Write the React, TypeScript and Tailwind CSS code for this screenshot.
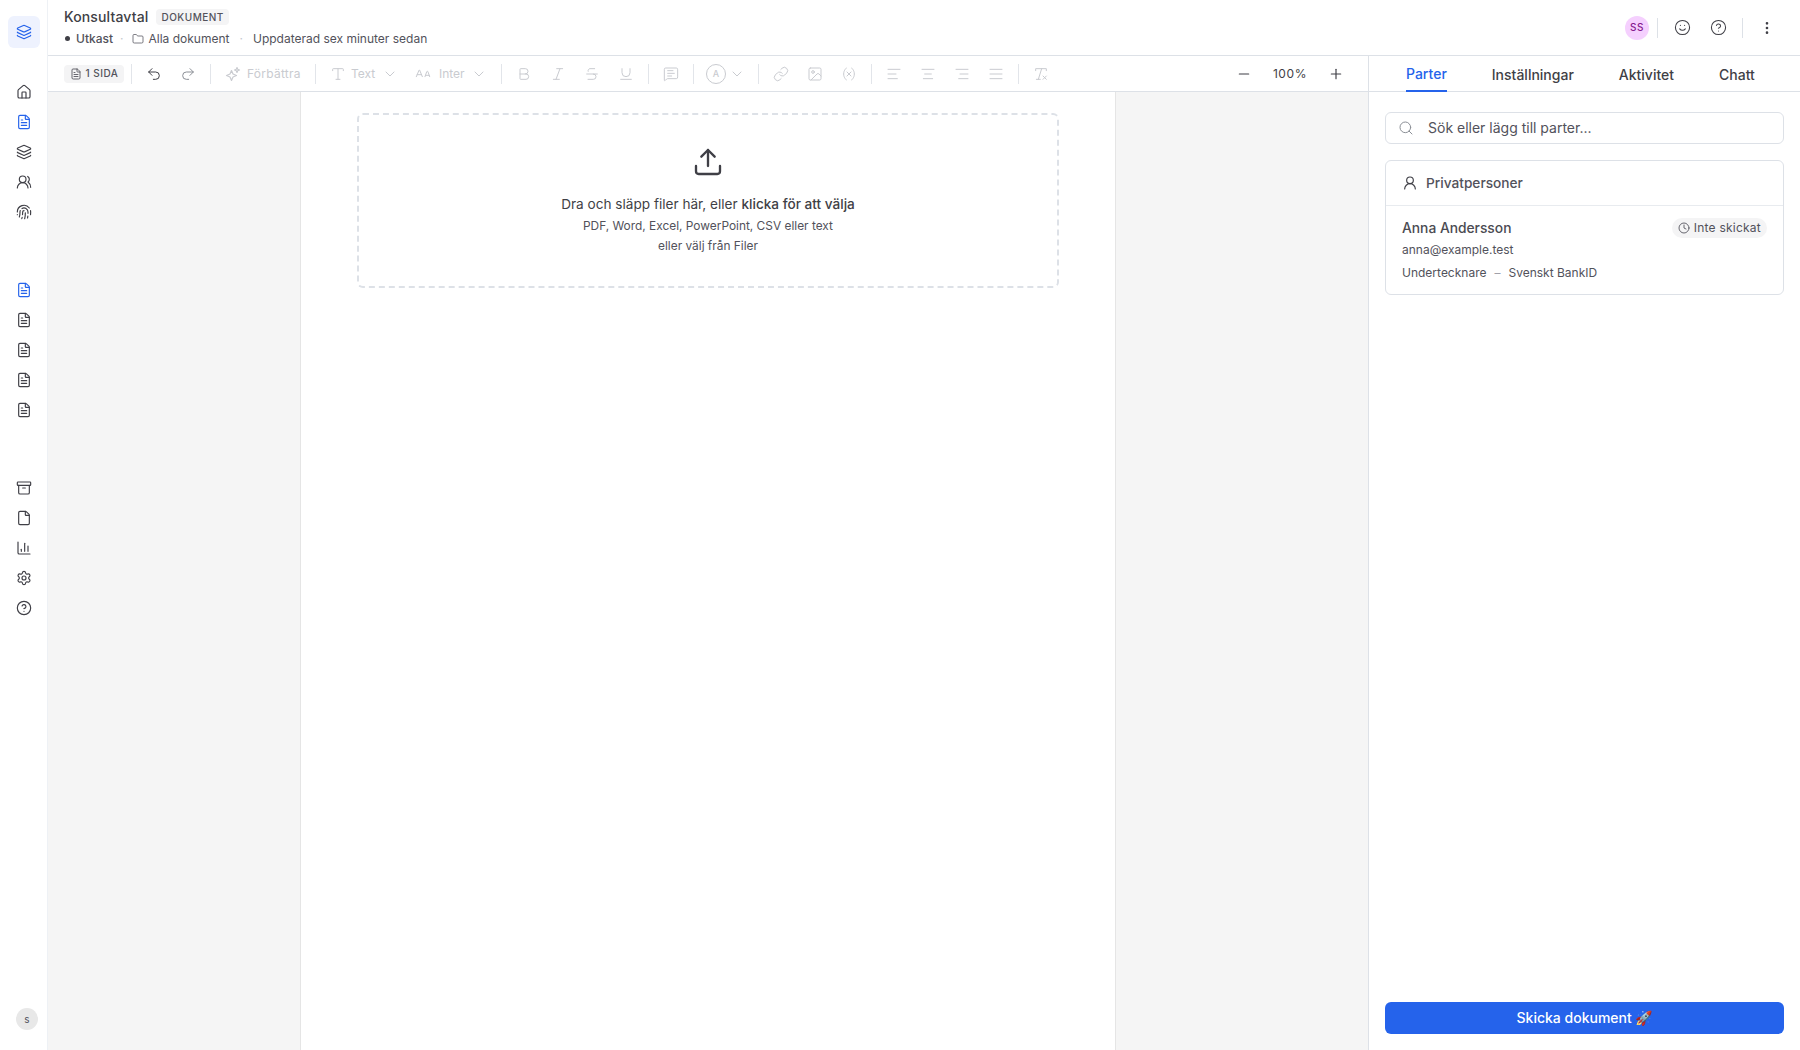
import {
  AlignCenter,
  AlignJustify,
  AlignLeft,
  AlignRight,
  Archive,
  Bold,
  ChartColumn,
  ChevronDown,
  CircleHelp,
  Clock,
  EllipsisVertical,
  File,
  FileText,
  Fingerprint,
  Folder,
  House,
  Image,
  Italic,
  Layers,
  Link,
  MessageSquareText,
  Minus,
  Plus,
  Redo2,
  RemoveFormatting,
  Search,
  Settings,
  Smile,
  Strikethrough,
  Type,
  Underline,
  Undo2,
  Upload,
  UserRound,
  UsersRound,
  Variable,
  ALargeSmall,
  type LucideIcon,
} from 'lucide-react';

function SideIcon({ icon: Icon, active }: { icon: LucideIcon; active?: boolean }) {
  return (
    <div className="flex h-[30px] w-full items-center justify-center">
      <Icon className={active ? 'h-4 w-4 text-[#2563eb]' : 'h-4 w-4 text-[#3f3f46]'} strokeWidth={1.75} />
    </div>
  );
}

function Sidebar() {
  return (
    <aside className="flex h-full w-[48px] shrink-0 flex-col border-r border-[#eef1f5] bg-white">
      <div className="mx-2 mt-4 flex h-8 w-8 items-center justify-center rounded-md bg-[#eef2fe]">
        <Layers className="h-4 w-4 text-[#2563eb]" strokeWidth={1.75} />
      </div>
      <div className="mt-[29px]">
        <SideIcon icon={House} />
        <SideIcon icon={FileText} active />
        <SideIcon icon={Layers} />
        <SideIcon icon={UsersRound} />
        <SideIcon icon={Fingerprint} />
      </div>
      <div className="mt-[48px]">
        <SideIcon icon={FileText} active />
        <SideIcon icon={FileText} />
        <SideIcon icon={FileText} />
        <SideIcon icon={FileText} />
        <SideIcon icon={FileText} />
      </div>
      <div className="mt-[48px]">
        <SideIcon icon={Archive} />
        <SideIcon icon={File} />
        <SideIcon icon={ChartColumn} />
        <SideIcon icon={Settings} />
        <SideIcon icon={CircleHelp} />
      </div>
      <div className="mt-auto mb-5 ml-4 flex h-[22px] w-[22px] items-center justify-center rounded-full bg-[#e8e8e8] text-[10px] text-[#52525b]">
        s
      </div>
    </aside>
  );
}

function Header() {
  return (
    <header className="flex h-[56px] shrink-0 items-center justify-between border-b border-[#dde1e7] bg-white pl-4 pr-[25px]">
      <div className="pb-[2px]">
        <div className="flex items-center gap-2">
          <span className="text-[14px] leading-5 font-medium tracking-[0.01em] text-[#3f3f46]">Konsultavtal</span>
          <span className="rounded bg-[#f4f4f5] px-[5px] text-[10px] leading-4 font-medium tracking-[0.05em] text-[#52525b]">
            DOKUMENT
          </span>
        </div>
        <div className="mt-1 flex items-center text-xs leading-4 text-[#52525b]">
          <span className="ml-[1px] h-[5px] w-[5px] rounded-full bg-[#3f3f46]" />
          <span className="ml-[6px] font-medium">Utkast</span>
          <span className="mx-[7px] text-[#c4c7cc]">·</span>
          <Folder className="ml-[1px] h-3 w-3" strokeWidth={1.5} />
          <span className="ml-[5px]">Alla dokument</span>
          <span className="mx-[10px] text-[#c4c7cc]">·</span>
          <span>Uppdaterad sex minuter sedan</span>
        </div>
      </div>
      <div className="flex items-center text-[#3f3f46]">
        <div className="flex h-6 w-6 items-center justify-center rounded-full bg-[#f5d0fe] text-[10px] font-medium tracking-[0.05em] text-[#86198f]">
          SS
        </div>
        <span className="ml-2 h-5 w-px bg-[#dde1e7]" />
        <Smile className="ml-4 h-[17px] w-[17px]" strokeWidth={1.5} />
        <CircleHelp className="ml-[19px] h-[17px] w-[17px]" strokeWidth={1.5} />
        <span className="ml-[15px] h-5 w-px bg-[#dde1e7]" />
        <EllipsisVertical className="ml-4 h-4 w-4" strokeWidth={2} />
      </div>
    </header>
  );
}

function Sep() {
  return <span className="mx-[5px] h-5 w-px shrink-0 bg-[#e2e5ea]" />;
}

function ToolButton({ icon: Icon, dark }: { icon: LucideIcon; dark?: boolean }) {
  return (
    <div className="flex h-[34px] w-[34px] shrink-0 items-center justify-center">
      <Icon className={dark ? 'h-4 w-4 text-[#3f3f46]' : 'h-4 w-4 text-[#c9cbd0]'} strokeWidth={1.5} />
    </div>
  );
}

function SparkIcon() {
  return (
    <svg viewBox="0 0 16 16" className="h-4 w-4 text-[#c9cbd0]" fill="none" stroke="currentColor" strokeWidth="1.2" strokeLinejoin="round">
      <path d="M6.5 4.5 8 8l3.5 1.5L8 11l-1.5 3.5L5 11 1.5 9.5 5 8z" />
      <path d="M12 1.5 12.7 3.3 14.5 4 12.7 4.7 12 6.5 11.3 4.7 9.5 4 11.3 3.3z" />
    </svg>
  );
}

function Toolbar() {
  return (
    <div className="flex h-[36px] shrink-0 items-center border-b border-[#dde1e7] bg-white pl-4 pr-6 text-xs text-[#c9cbd0]">
      <div className="flex h-[18px] w-[60px] shrink-0 items-center justify-center gap-1 rounded bg-[#f4f4f5] text-[10px] font-medium tracking-[0.05em] text-[#52525b]">
        <FileText className="h-3 w-3" strokeWidth={1.75} />
        1 SIDA
      </div>
      <span className="ml-[7px] mr-[5px] h-5 w-px shrink-0 bg-[#e2e5ea]" />
      <ToolButton icon={Undo2} dark />
      <div className="flex h-[34px] w-[34px] shrink-0 items-center justify-center">
        <Redo2 className="h-4 w-4 text-[#8b8f96]" strokeWidth={1.5} />
      </div>
      <Sep />
      <div className="flex w-[94px] items-center pl-[9px]">
        <SparkIcon />
        <span className="ml-[6px] tracking-[0.02em]">Förbättra</span>
      </div>
      <Sep />
      <div className="flex w-[85px] items-center pl-[9px]">
        <Type className="h-4 w-4" strokeWidth={1.5} />
        <span className="ml-[5px]">Text</span>
        <ChevronDown className="ml-[7px] h-4 w-4" strokeWidth={1.5} />
      </div>
      <div className="flex w-[90px] items-center pl-[9px]">
        <ALargeSmall className="h-4 w-4" strokeWidth={1.5} />
        <span className="ml-2">Inter</span>
        <ChevronDown className="ml-[6px] h-4 w-4" strokeWidth={1.5} />
      </div>
      <Sep />
      <ToolButton icon={Bold} />
      <ToolButton icon={Italic} />
      <ToolButton icon={Strikethrough} />
      <ToolButton icon={Underline} />
      <Sep />
      <ToolButton icon={MessageSquareText} />
      <Sep />
      <div className="flex w-[54px] items-center pl-[7px]">
        <span className="flex h-5 w-5 items-center justify-center rounded-full border border-[#c9cbd0] text-[9px] font-medium">A</span>
        <ChevronDown className="ml-[3px] h-4 w-4" strokeWidth={1.5} />
      </div>
      <Sep />
      <ToolButton icon={Link} />
      <ToolButton icon={Image} />
      <ToolButton icon={Variable} />
      <Sep />
      <ToolButton icon={AlignLeft} />
      <ToolButton icon={AlignCenter} />
      <ToolButton icon={AlignRight} />
      <ToolButton icon={AlignJustify} />
      <Sep />
      <ToolButton icon={RemoveFormatting} />
      <div className="ml-auto flex items-center text-[#3f3f46]">
        <Minus className="h-4 w-4" strokeWidth={1.75} />
        <span className="w-[76px] text-center text-xs tracking-[0.05em]">100%</span>
        <Plus className="h-4 w-4" strokeWidth={1.75} />
      </div>
    </div>
  );
}

function Canvas() {
  return (
    <div className="flex min-h-0 flex-1 bg-[#f5f5f5] pl-[252px]">
      <div className="h-full w-[816px] border-x border-[#e5e5e5] bg-white px-[56px] pt-[21px]">
        <div className="flex h-[175px] flex-col items-center rounded-md border-2 border-dashed border-[#dde1e7] pt-[31px] text-[#3f3f46]">
          <Upload className="h-8 w-8" strokeWidth={1.75} />
          <p className="mt-[16px] text-[13.6px] leading-5">
            Dra och släpp filer här, eller <span className="font-medium">klicka för att välja</span>
          </p>
          <p className="mt-[3px] text-[11.9px] leading-[18px] text-[#52525b]">PDF, Word, Excel, PowerPoint, CSV eller text</p>
          <p className="mt-[2px] text-[11.9px] leading-[18px] text-[#52525b]">eller välj från Filer</p>
        </div>
      </div>
    </div>
  );
}

function PartiesPanel() {
  return (
    <aside className="flex h-full w-[432px] shrink-0 flex-col border-l border-[#dde1e7] bg-white">
      <div className="flex h-[36px] shrink-0 items-stretch gap-[45px] border-b border-[#dde1e7] pl-[37px] text-sm font-medium text-[#3f3f46]">
        <span className="mb-[-1px] flex items-center border-b-2 border-[#2563eb] pt-[2px] text-[#2563eb]">Parter</span>
        <span className="flex items-center pt-[2px]">Inställningar</span>
        <span className="flex items-center pt-[2px]">Aktivitet</span>
        <span className="flex items-center pt-[2px]">Chatt</span>
      </div>
      <div className="flex min-h-0 flex-1 flex-col px-4 pt-5 pb-4">
        <div className="flex h-8 items-center rounded-md border border-[#dde1e7] pl-3">
          <Search className="h-4 w-4 text-[#8b8f96]" strokeWidth={1.5} />
          <span className="ml-[14px] text-sm text-[#52525b]">Sök eller lägg till parter...</span>
        </div>
        <div className="mt-4 h-[135px] rounded-md border border-[#dde1e7]">
          <div className="flex h-[45px] items-center border-b border-[#e8ebef] pl-4 text-[13.7px] font-medium text-[#52525b]">
            <UserRound className="h-4 w-4 text-[#3f3f46]" strokeWidth={1.75} />
            <span className="ml-[8px]">Privatpersoner</span>
          </div>
          <div className="px-4 pt-3">
            <div className="flex items-center justify-between">
              <span className="text-[13.8px] font-medium text-[#4b4b52]">Anna Andersson</span>
              <span className="flex h-5 items-center gap-1 rounded-full bg-[#f4f4f5] px-[6px] text-xs tracking-[0.02em] text-[#52525b]">
                <Clock className="h-3 w-3" strokeWidth={1.75} />
                Inte skickat
              </span>
            </div>
            <div className="mt-[1px] text-xs leading-5 text-[#52525b]">anna@example.test</div>
            <div className="mt-[3px] flex text-xs leading-5 text-[#52525b]">
              Undertecknare
              <span className="mx-2 text-[#a1a1aa]">–</span>
              Svenskt BankID
            </div>
          </div>
        </div>
        <button className="mt-auto h-8 rounded-md bg-[#2563eb] text-sm font-medium text-white">Skicka dokument 🚀</button>
      </div>
    </aside>
  );
}

export default function App() {
  return (
    <div className="flex h-screen w-full overflow-hidden bg-white font-['Inter',sans-serif]">
      <Sidebar />
      <div className="flex min-w-0 flex-1 flex-col">
        <Header />
        <div className="flex min-h-0 flex-1">
          <div className="flex min-w-0 flex-1 flex-col">
            <Toolbar />
            <Canvas />
          </div>
          <PartiesPanel />
        </div>
      </div>
    </div>
  );
}
